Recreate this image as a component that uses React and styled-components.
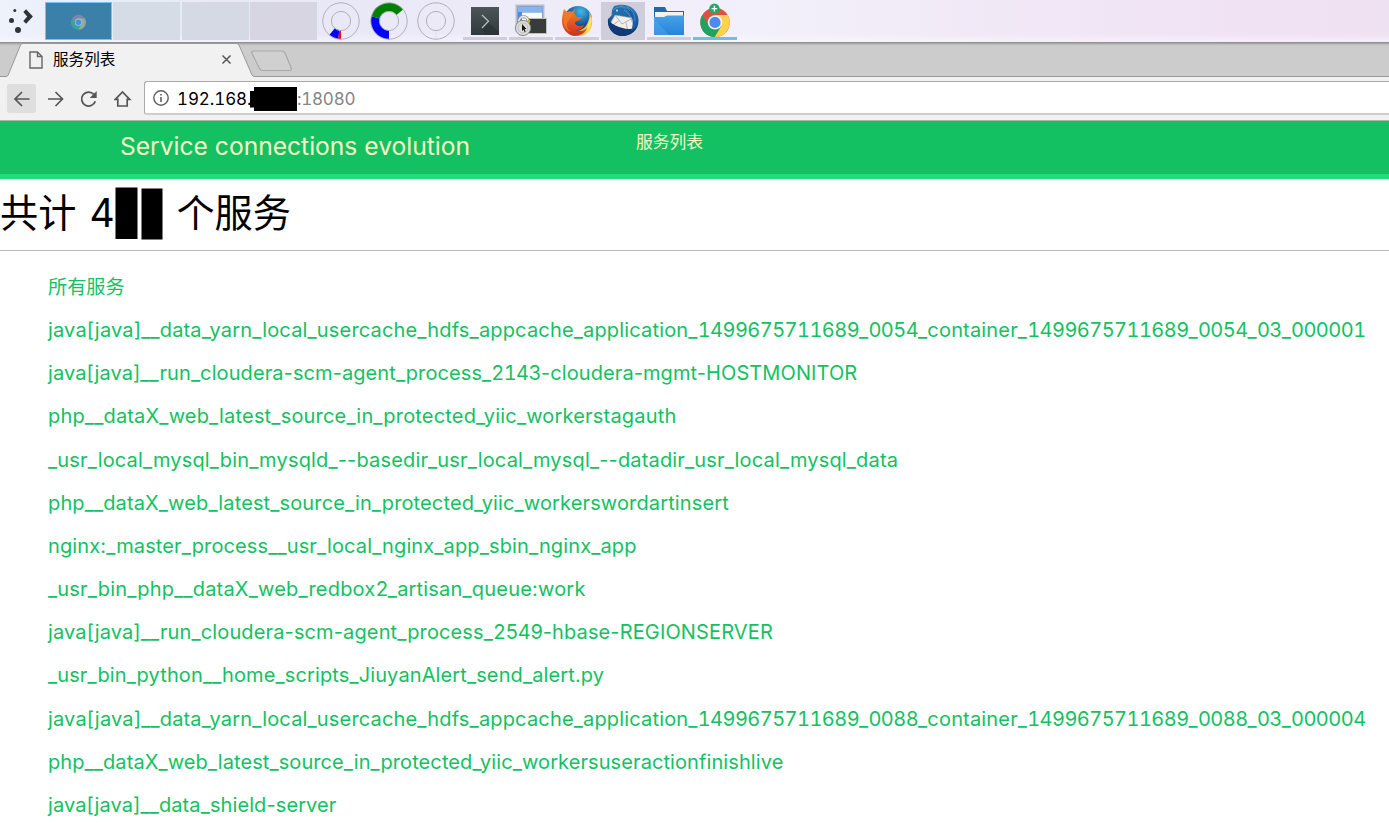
import React from "react";
import styled, { createGlobalStyle } from "styled-components";

const GlobalStyle = createGlobalStyle`
  * { box-sizing: border-box; }
  html, body { margin: 0; overflow: hidden; background: #fff; }
  body { font-family: Inter, "Noto Sans CJK SC", sans-serif; }
  svg { display: block; flex: none; }
`;

const Screen = styled.div`
  display: flex;
  flex-direction: column;
  width: 100%;
  height: 823px;
  overflow: hidden;
`;

/* ---------- desktop panel ---------- */
const Panel = styled.header`
  display: flex;
  align-items: flex-start;
  height: 42px;
  flex: none;
  background:
    linear-gradient(180deg, rgba(255,255,255,0) 80%, rgba(255,255,255,.45) 100%),
    linear-gradient(90deg, #edf2fb 0, #e8ebf8 120px, #e9e8f6 340px, #efecf9 560px, #f2f0fa 760px, #f1e8f6 1000px, #f0e1f3 1300px, #eee1f1 100%);
`;
const Launcher = styled.div`
  width: 45px;
  padding: 7px 0 0 8px;
`;
const Pager = styled.div`
  display: flex;
  gap: 1.4px;
  padding-top: 2px;
  width: 277px;
`;
const Desktop = styled.div`
  display: flex;
  align-items: center;
  justify-content: center;
  width: 67px;
  height: 38px;
  background: ${(p) => p.$color};
  border: ${(p) => (p.$active ? "1px solid #77c2ee" : "0")};
`;
const Monitors = styled.div`
  display: flex;
  gap: 9.5px;
  padding-top: 2px;
  width: 141px;
`;
const Tasks = styled.div`
  display: flex;
  gap: 2px;
  padding-top: 2px;
`;
const Task = styled.div`
  display: flex;
  align-items: flex-start;
  justify-content: center;
  width: 44px;
  height: 38px;
  background: ${(p) => (p.$raised ? "#cfccdb" : "transparent")};
  border-bottom: 3px solid ${(p) => (p.$current ? "#6dbeec" : "#d0cddb")};
`;

/* ---------- browser chrome ---------- */
const TabStrip = styled.div`
  position: relative;
  display: flex;
  height: 35px;
  flex: none;
  background: linear-gradient(180deg, #888 0, #999 1px, #b5b5b5 2px, #c5c5c5 3px, #ccc 4px);
  border-bottom: 1px solid #999;
`;
const TabShape = styled.svg`
  position: absolute;
  left: 0;
  top: 0;
`;
const Tab = styled.div`
  position: relative;
  display: flex;
  align-items: center;
  width: 252px;
  padding: 1px 0 0 29px;
`;
const TabTitle = styled.span`
  margin-left: 9px;
  padding-top: 1px;
  width: 168px;
  font-size: 15.6px;
  line-height: 20px;
  color: #000;
`;
const Toolbar = styled.nav`
  display: flex;
  align-items: center;
  height: 44px;
  flex: none;
  padding-left: 7px;
  background: #f1f1f1;
  border-bottom: 1px solid #b0b0b0;
`;
const ToolButton = styled.div`
  display: flex;
  align-items: center;
  justify-content: center;
  width: 29px;
  height: 29px;
  margin-right: ${(p) => p.$gap}px;
  border-radius: 2px;
  background: ${(p) => (p.$pressed ? "#dedede" : "transparent")};
`;
const AddressBar = styled.div`
  display: flex;
  align-items: center;
  flex: 1;
  height: 34px;
  margin-bottom: 1px;
  padding: 1px 0 0 8px;
  background: #fff;
  border: 1px solid #a9a9a9;
  border-bottom: 2px solid #cdcdcd;
  border-right: 0;
  border-radius: 3px 0 0 3px;
  font-size: 17px;
  line-height: 24px;
  font-variant-numeric: tabular-nums;
`;
const Host = styled.span`
  width: 73px;
  margin-left: 8px;
  padding-top: 2px;
  letter-spacing: -0.1px;
  white-space: nowrap;
  color: #000;
`;
const Port = styled.span`
  margin-left: 0;
  padding-top: 2px;
  letter-spacing: -0.25px;
  color: #858585;
`;

/* ---------- page ---------- */
const Banner = styled.div`
  display: flex;
  align-items: flex-start;
  height: 58px;
  flex: none;
  padding-left: 120px;
  background: #13c163;
  border-bottom: 5px solid #1fe078;
  color: #f6f6c4;
`;
const Brand = styled.div`
  width: 516px;
  padding-top: 9px;
  font-size: 24.6px;
  line-height: 32px;
`;
const NavLink = styled.div`
  padding-top: 9px;
  font-size: 16.8px;
  line-height: 24px;
`;
const Heading = styled.h1`
  display: flex;
  align-items: center;
  height: 72px;
  flex: none;
  margin: 0;
  padding-bottom: 4px;
  border-bottom: 1px solid #b9b9b9;
  font-size: 38.2px;
  font-weight: 400;
  line-height: 60px;
  color: #000;
`;
const Count = styled.span`
  margin-left: 13px;
  width: 26px;
  font-size: 39px;
  font-variant-numeric: tabular-nums;
`;
const CountMask = styled.svg`
  margin: 2px 13px 0 0;
`;
const ServiceList = styled.ul`
  margin: 0;
  padding: 15px 0 0 48px;
  list-style: none;
`;
const Service = styled.li`
  height: 43.17px;
  font-size: ${(p) => (p.$label ? 19.2 : 20)}px;
  line-height: 43.17px;
  letter-spacing: ${(p) => p.$track || 0}px;
  white-space: nowrap;
  color: #13c162;
`;
const Digits = styled.span`
  font-variant-numeric: tabular-nums;
  letter-spacing: -0.55px;
`;

const services = [
  ["java[java]__data_yarn_local_usercache_hdfs_appcache_application_1499675711689_0054_container_1499675711689_0054_03_000001", 0.17],
  ["java[java]__run_cloudera-scm-agent_process_2143-cloudera-mgmt-HOSTMONITOR", 0.09],
  ["php__dataX_web_latest_source_in_protected_yiic_workerstagauth", 0.18],
  ["_usr_local_mysql_bin_mysqld_--basedir_usr_local_mysql_--datadir_usr_local_mysql_data", 0.16],
  ["php__dataX_web_latest_source_in_protected_yiic_workerswordartinsert", 0.13],
  ["nginx:_master_process__usr_local_nginx_app_sbin_nginx_app", 0.13],
  ["_usr_bin_php__dataX_web_redbox2_artisan_queue:work", 0.19],
  ["java[java]__run_cloudera-scm-agent_process_2549-hbase-REGIONSERVER", 0.13],
  ["_usr_bin_python__home_scripts_JiuyanAlert_send_alert.py", 0.12],
  ["java[java]__data_yarn_local_usercache_hdfs_appcache_application_1499675711689_0088_container_1499675711689_0088_03_000004", 0.17],
  ["php__dataX_web_latest_source_in_protected_yiic_workersuseractionfinishlive", 0.09],
  ["java[java]__data_shield-server", 0.1],
];

const withDigits = (name) =>
  name.split(/(\d+)/).map((part, i) => (i % 2 ? <Digits key={i}>{part}</Digits> : part));

const Ring = ({ children }) => (
  <svg width="38" height="38" viewBox="-19 -19 38 38">
    {children}
    <circle r="18.2" fill="none" stroke="#a9a8b4" strokeWidth=".9" />
    <circle r="9.6" fill="none" stroke="#a9a8b4" strokeWidth=".9" />
  </svg>
);

const ChromeLogo = ({ size, faded, badge }) => (
  <svg width={size} height={size * 1.18} viewBox="-15 -20.4 30 35.4" opacity={faded ? 0.6 : 1}>
    <circle r="14.7" fill={faded ? "#b08a98" : "#dc5145"} />
    <path d="M-12.7-7.4A14.7 14.7 0 0 0-.2 14.7L6.3 3.7-6.3 3.7Z" fill={faded ? "#2cc0a0" : "#1da362"} />
    <path d="M12.7-7.3A14.7 14.7 0 0 1-.3 14.7L6.3 3.6 0-7.3Z" fill={faded ? "#c8c890" : "#ffd24c"} />
    <circle r="7.2" fill="#f5f5f5" />
    <circle r="5.6" fill={faded ? "#3fa0ff" : "#4a8af4"} />
    {badge && (
      <g>
        <circle cx="-.6" cy="-13.8" r="5.2" fill="#1cae66" />
        <path d="M-3.4-13.8h5.600M-.6-16.600v5.600" stroke="#fff" strokeWidth="1.3" />
      </g>
    )}
  </svg>
);

const Terminal = () => (
  <svg width="28" height="35" viewBox="0 0 28 35">
    <defs>
      <linearGradient id="term" x2="0" y2="1"><stop stopColor="#4c5658" /><stop offset="1" stopColor="#30393b" /></linearGradient>
    </defs>
    <path d="M0 5h28v28H0z" fill="url(#term)" />
    <path d="M17 20l11 10v3H14l-4-7z" fill="#273033" opacity=".6" />
    <path d="M11 13l6.5 6.3L11 26" fill="none" stroke="#b7bdbf" strokeWidth="1.3" />
  </svg>
);

const SecureScreen = () => (
  <svg width="34" height="35" viewBox="0 0 34 35">
    <path d="M2.5 3.5h27v18h-27z" fill="#4d8ae2" stroke="#b9bdc3" strokeWidth="2" />
    <path d="M4 5h24v5H4z" fill="#87b4f1" />
    <path d="M8 10.5h20v12H8z" fill="#fafafa" />
    <path d="M10 13.5v3" stroke="#444" />
    <path d="M12.5 16.5h20v15h-20z" fill="#393b3b" stroke="#bfc1c0" />
    <path d="M5 24v-5a4.5 4.5 0 0 1 9 0v5" fill="none" stroke="#8e8e8e" strokeWidth="3.2" />
    <path d="M5 24v-5a4.5 4.5 0 0 1 9 0v5" fill="none" stroke="#e7e7e7" strokeWidth="1.8" />
    <circle cx="9" cy="26" r="7.6" fill="#deded9" stroke="#888" />
    <circle cx="9" cy="26" r="5" fill="none" stroke="#b4b4b0" strokeWidth=".8" />
    <path d="M8 22v7l1.500-1.300 1.300 2.500.9-.5-1.200-2.500 2-.2z" fill="#151515" />
    <circle cx="14.8" cy="19" r="1.5" fill="#c3b52a" />
  </svg>
);

const Firefox = () => (
  <svg width="32" height="35" viewBox="0 0 32 35">
    <defs>
      <radialGradient id="globe" cx=".6" cy=".2"><stop stopColor="#3fb9e8" /><stop offset="1" stopColor="#174b91" /></radialGradient>
      <linearGradient id="fox" x2="0" y2="1"><stop stopColor="#ee852c" /><stop offset=".65" stopColor="#dc4b20" /><stop offset="1" stopColor="#c93420" /></linearGradient>
    </defs>
    <circle cx="17" cy="18" r="14" fill="url(#globe)" />
    <path d="M28 10c5 7 4 16-2 21-7 5-16 3-20-2 10 2 17-1 20-7 2-4 3-7 2-12z" fill="#f8bd32" />
    <path d="M30 13c2 7-1 15-5 18l2-9z" fill="#fbe56a" />
    <path d="M3 7l3 3c2-1 4-1 5 0l3-3-1 4 3 4 5 0c-1 3-5 4-7 5 0 4 5 5 9 3-1 3-4 5-8 5 4 2 8 1 11-2-2 5-7 8-12 8C7 34 1 27 1 19c0-5 1-8 2-12z" fill="url(#fox)" />
    <path d="M3 12c3-3 7-2 8 1l-3 5c-4 4-2 9 2 12-6-2-9-8-7-18z" fill="#f27c2b" opacity=".8" />
  </svg>
);

const Thunderbird = () => (
  <svg width="32" height="35" viewBox="0 0 32 35">
    <defs>
      <linearGradient id="bird" x2="0" y2="1"><stop stopColor="#2f7fc0" /><stop offset=".6" stopColor="#17508f" /><stop offset="1" stopColor="#092d62" /></linearGradient>
    </defs>
    <path d="M7 4C22-1 32 9 31.500 19 31.500 28 24 34 15 34 6 34 0 26 1 17L6 12 5 8z" fill="url(#bird)" />
    <path d="M8 13l18 3 1 9-6 5-16-5-1-5z" fill="#f1efec" stroke="#8f97a8" strokeWidth=".6" />
    <path d="M8 13l7 9 11-6M4.500 24l7-5M21 29.500l-2-9" fill="none" stroke="#aaa2a0" strokeWidth=".8" />
    <path d="M8 5c7-1 12 3 12 10-3-3-6-4-10-3L7 13 5 15C4 11 5 7 8 5z" fill="#1f6dac" />
    <path d="M1 17c-1 10 6 17 16 17 5-1 9-4 12-8-5 2-11 1-17-1-5-2-9-4-11-8z" fill="#123a74" />
    <path d="M15 4c9 1 16 8 15 19-2 3-4 5-6 6 4-9 1-20-9-25z" fill="#1d5c9e" />
    <path d="M6 8c5-5 13-4 17 1M20 5c6 3 8 8 8 14M17 8c5 3 7 7 8 12" fill="none" stroke="#5fa5d8" strokeWidth=".7" />
    <circle cx="10" cy="8.500" r=".9" fill="#dff1ff" />
  </svg>
);

const Folder = () => (
  <svg width="32" height="35" viewBox="0 0 32 35">
    <defs>
      <linearGradient id="folder" x2="0" y2="1"><stop stopColor="#48a0e6" /><stop offset="1" stopColor="#2585dc" /></linearGradient>
    </defs>
    <path d="M1 5h11l2 4h17v6H1z" fill="#2068a8" />
    <path d="M2 10h28v6H2z" fill="#f2f2ee" />
    <path d="M1 15h10l3-1.500h17V33H1z" fill="url(#folder)" />
    <path d="M1 17l15 16H1z" fill="#63aee9" opacity=".35" />
  </svg>
);

export default function App() {
  return (
    <Screen>
      <GlobalStyle />
      <Panel>
        <Launcher>
          <svg width="26" height="27" viewBox="0 0 26 27">
            <g fill="#2e3338">
              <circle cx="6.800" cy="3.500" r="1.500" />
              <circle cx="3.500" cy="13.500" r="2.500" />
              <circle cx="10" cy="23" r="3" />
              <path d="M15.300 5l2.800-2.800 6.800 7.300-6.800 7.300-2.800-2.800 3.900-4.500z" />
            </g>
          </svg>
        </Launcher>
        <Pager>
          <Desktop $active $color="#3b80a8"><ChromeLogo size={15} faded /></Desktop>
          <Desktop $color="#d5dce6" />
          <Desktop $color="#d5d9e4" />
          <Desktop $color="#d7d5e2" />
        </Pager>
        <Monitors>
          <Ring>
            <path d="M0 9.600V18.200A18.200 18.200 0 0 1-3 18L-1.600 9.500Z" fill="red" />
            <path d="M-1.600 9.500L-3 18A18.200 18.200 0 0 1-11.700 13.900L-6.200 7.300Z" fill="#00f" />
          </Ring>
          <Ring>
            <path d="M0 9.600V18.200A18.200 18.200 0 0 1-17.600-4.700L-9.300-2.500A9.600 9.600 0 0 0 0 9.600Z" fill="#00f" />
            <path d="M-9.300-2.500L-17.600-4.700A18.200 18.200 0 0 1 14.100-11.500L7.500-6A9.600 9.600 0 0 0-9.300-2.500Z" fill="green" />
          </Ring>
          <Ring><path d="M0 10v8" stroke="#d5e5ee" /></Ring>
        </Monitors>
        <Tasks>
          <Task><Terminal /></Task>
          <Task><SecureScreen /></Task>
          <Task><Firefox /></Task>
          <Task $raised><Thunderbird /></Task>
          <Task><Folder /></Task>
          <Task $current><ChromeLogo size={30} badge /></Task>
        </Tasks>
      </Panel>

      <TabStrip>
        <TabShape width="300" height="35" viewBox="0 0 300 35">
          <path d="M0 34.500H6Q7.500 34.500 8.200 33L20.500 3Q21.500 1.500 23 1.500H236Q238 1.500 239 3L252 33Q253 34.500 255 34.500V35H0Z" fill="#f1f1f1" />
          <path d="M0 34.500H6Q7.500 34.500 8.200 33L20.500 3Q21.500 1.500 23 1.500H236Q238 1.500 239 3L252 33Q253 34.500 255 34.500" fill="none" stroke="#999" />
          <path d="M253.500 9H282Q284 9 285 11L291 25.500Q292 28.500 289.500 28.500H263Q260.500 28.500 259.500 26.500L252 11.500Q251 9 253.500 9Z" fill="#d0d0d0" stroke="#a9a9a9" strokeWidth="1.200" />
        </TabShape>
        <Tab>
          <svg width="15" height="18" viewBox="0 0 15 18">
            <path d="M1 1H8.500L13 5.500V17H1ZM8.500 1V5.500H13" fill="none" stroke="#666" strokeWidth="1.400" />
          </svg>
          <TabTitle>服务列表</TabTitle>
          <svg width="11" height="11" viewBox="0 0 11 11"><path d="M1.500 1.500l8 8M9.500 1.500l-8 8" stroke="#555" strokeWidth="1.500" /></svg>
        </Tab>
      </TabStrip>

      <Toolbar>
        <ToolButton $pressed $gap={5}>
          <svg width="18" height="18" viewBox="0 0 18 18"><path d="M16.500 9H2M9 2L2 9l7 7" fill="none" stroke="#555" strokeWidth="1.700" /></svg>
        </ToolButton>
        <ToolButton $gap={4}>
          <svg width="18" height="18" viewBox="0 0 18 18"><path d="M1 9H15.500M8.500 2l7 7-7 7" fill="none" stroke="#555" strokeWidth="1.700" /></svg>
        </ToolButton>
        <ToolButton $gap={5}>
          <svg width="18" height="18" viewBox="0 0 18 18">
            <path d="M15.300 11.200A7 7 0 1 1 13.800 4.300" fill="none" stroke="#555" strokeWidth="1.800" />
            <path d="M16.700 1v7h-7z" fill="#555" />
          </svg>
        </ToolButton>
        <ToolButton $gap={7}>
          <svg width="18" height="18" viewBox="0 0 18 18"><path d="M1.300 9.300L8.500 2l7.200 7.300H13.200V16H3.800V9.300Z" fill="none" stroke="#555" strokeWidth="1.700" /></svg>
        </ToolButton>
        <AddressBar>
          <svg width="16" height="16" viewBox="0 0 16 16">
            <circle cx="8" cy="8" r="7.200" fill="none" stroke="#5f5f5f" strokeWidth="1.400" />
            <path d="M8 7v5M8 4v1.600" stroke="#5f5f5f" strokeWidth="1.600" />
          </svg>
          <Host>192.168.</Host>
          <svg width="47" height="25" viewBox="0 0 47 25"><path d="M4 1H47V25H4V21.500H0V5H4Z" fill="#000" /></svg>
          <Port>:18080</Port>
        </AddressBar>
      </Toolbar>

      <Banner>
        <Brand>Service connections evolution</Brand>
        <NavLink>服务列表</NavLink>
      </Banner>
      <Heading>
        <span>共计</span>
        <Count>4</Count>
        <CountMask width="48" height="53" viewBox="0 0 48 53">
          <path d="M.5 .5H22.500V52H.5ZM26.500 1.500H47.500V52.500H26.500Z" fill="#000" />
        </CountMask>
        <span>个服务</span>
      </Heading>
      <ServiceList>
        <Service $label>所有服务</Service>
        {services.map(([name, track]) => (
          <Service key={name} $track={track}>{withDigits(name)}</Service>
        ))}
      </ServiceList>
    </Screen>
  );
}
